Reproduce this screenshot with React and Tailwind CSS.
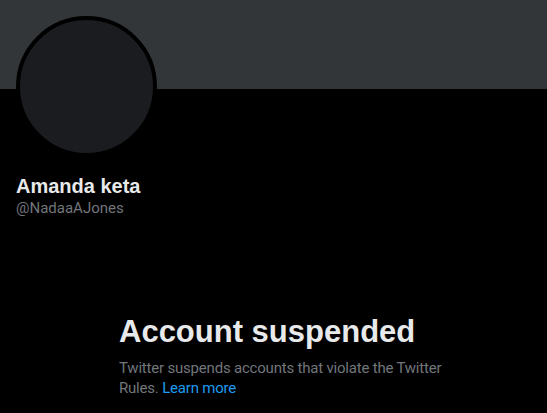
import React from "react";

const Profile = {
  name: "Amanda keta",
  handle: "@NadaaAJones",
};

const App = () => {
  return (
    <div
      className="w-[547px] h-[413px] overflow-hidden bg-black"
      style={{ fontFamily: '"Liberation Sans", Arial, sans-serif' }}
    >
      {/* banner */}
      <div className="h-[89px] w-full bg-[#333639]"></div>

      <div className="px-4">
        <div className="-mt-[73px] w-[141px] h-[141px] rounded-full border-4 border-black bg-[#1a1c1f]"></div>

        <div className="mt-[17px]">
          <p className="text-[20px] leading-[24px] font-bold text-[#e7e9ea]">
            {Profile.name}
          </p>
          <p className="font-['Roboto',sans-serif] text-[15px] leading-[20px] text-[#71767b]">
            {Profile.handle}
          </p>
        </div>
      </div>

      <div className="mt-[96px] pl-[119px]">
        <h1 className="text-[31px] leading-[36px] font-bold text-[#e7e9ea]">
          Account suspended
        </h1>
        <p className="mt-2 max-w-[340px] font-['Roboto',sans-serif] text-[15px] leading-[20px] tracking-[-0.2px] text-[#71767b]">
          Twitter suspends accounts that violate the Twitter Rules.{" "}
          <span className="text-[#1d9bf0]">Learn more</span>
        </p>
      </div>
    </div>
  );
};

export default App;
